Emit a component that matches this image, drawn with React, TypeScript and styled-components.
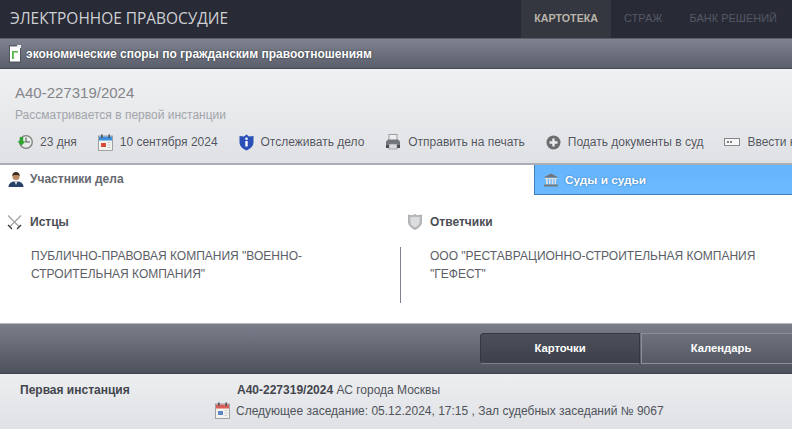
import React from "react";
import styled, { createGlobalStyle } from "styled-components";

const GlobalStyle = createGlobalStyle`
  html, body {
    margin: 0;
    padding: 0;
    height: 100%;
    overflow: hidden;
    background: #fff;
  }
  body {
    font-family: "Liberation Sans", Arial, sans-serif;
    font-size: 12px;
  }
`;

const Page = styled.div`
  width: 792px;
  height: 429px;
  overflow: hidden;
  display: flex;
  flex-direction: column;
`;

const Header = styled.header`
  height: 38px;
  flex: none;
  display: flex;
  justify-content: space-between;
  background: #282a36;
  border-bottom: 1px solid #585c68;
`;

const Logo = styled.div`
  padding-left: 10px;
  font-family: "Open Sans", sans-serif;
  font-size: 15.45px;
  line-height: 37px;
  color: #cfd0d3;
`;

const Nav = styled.nav`
  display: flex;
  padding-right: 1px;
`;

const NavItem = styled.a<{ $active?: boolean; $pad: number }>`
  padding: 0 ${({ $pad }) => $pad}px;
  font-size: ${({ $active }) => ($active ? "10.7px" : "11px")};
  line-height: 37px;
  font-weight: ${({ $active }) => ($active ? 700 : 400)};
  color: ${({ $active }) => ($active ? "#b9b5ab" : "#555965")};
  background: ${({ $active }) => ($active ? "#343640" : "transparent")};
`;

const CategoryBar = styled.div`
  height: 29px;
  flex: none;
  display: flex;
  align-items: center;
  gap: 5px;
  padding-left: 9px;
  background: linear-gradient(#7e838f, #5a5f6b);
  border-bottom: 1px solid #474b56;
  box-sizing: content-box;
`;

const CategoryText = styled.span`
  font-size: 12px;
  font-weight: 700;
  color: #fff;
  text-shadow: 0 0 2px #2d303a;
`;

const CaseInfo = styled.section`
  height: 96px;
  flex: none;
  box-sizing: border-box;
  padding: 15px 0 0 15px;
  background: linear-gradient(#f0f1f2, #dfe1e5);
  border-bottom: 2px solid #a9aeb7;
`;

const CaseNumber = styled.div`
  font-size: 15px;
  line-height: 18px;
  color: #85858b;
`;

const CaseStatus = styled.div`
  margin-top: 6px;
  font-size: 12px;
  line-height: 14px;
  color: #a3a5ab;
`;

const Tools = styled.div`
  display: flex;
  gap: 20.9px;
  margin-top: 11px;
  padding-left: 2px;
  white-space: nowrap;
`;

const Tool = styled.div`
  display: flex;
  align-items: center;
  gap: 7px;
  height: 18px;
  font-size: 12px;
  color: #50535c;
  text-shadow: 0 0 1px #fff;
  flex: none;
`;

const Icon = styled.svg`
  flex: none;
  display: block;
`;

const Tabs = styled.div`
  height: 30px;
  flex: none;
  display: flex;
`;

const Tab = styled.div<{ $active?: boolean }>`
  display: flex;
  align-items: center;
  gap: 6px;
  box-sizing: border-box;
  font-weight: 700;
  ${({ $active }) =>
    $active
      ? `
    width: 534px;
    padding: 0 0 2px 8px;
    font-size: 12px;
    color: #666870;
    background: #fff;
  `
      : `
    flex: 1;
    padding: 0 0 0 8px;
    font-size: 11.8px;
    color: #fff;
    text-shadow: 0 0 2px #2f6ea8;
    background: linear-gradient(#66b6fd, #6cb9ff);
    border-left: 1px solid #3e7fbd;
    border-bottom: 1px solid #3e7fbd;
  `}
`;

const Parties = styled.div`
  height: 128px;
  flex: none;
  display: grid;
  grid-template-columns: 400px 392px;
  padding-top: 17px;
  box-sizing: border-box;
  background: #fff;
`;

const Party = styled.div`
  display: flex;
  flex-direction: column;
`;

const PartyTitle = styled.div<{ $offset: number }>`
  display: flex;
  align-items: center;
  gap: 8px;
  height: 20px;
  padding-left: ${({ $offset }) => $offset}px;
  font-size: 12px;
  font-weight: 700;
  color: #4c4e56;
`;

const PartyBody = styled.div<{ $divided?: boolean }>`
  margin-top: 15px;
  height: 56px;
  box-sizing: border-box;
  padding: 0 ${({ $divided }) => ($divided ? "20px" : "70px")} 0
    ${({ $divided }) => ($divided ? "29px" : "30px")};
  font-size: 12px;
  line-height: 18px;
  color: #5b5e66;
  border-left: 1px solid ${({ $divided }) => ($divided ? "#7d818b" : "transparent")};
`;

const Switcher = styled.div`
  height: 51px;
  flex: none;
  display: flex;
  align-items: flex-start;
  padding: 9px 0 0 480px;
  box-sizing: border-box;
  background: linear-gradient(#7b7f8b, #4d515c);
  border-top: 1px solid #b6b9bf;
  border-bottom: 1px solid #3f434d;
`;

const SwitchButton = styled.div<{ $active?: boolean }>`
  height: 31px;
  flex: none;
  box-sizing: border-box;
  text-align: center;
  font-size: 11.3px;
  font-weight: 700;
  line-height: 29px;
  color: #fff;
  ${({ $active }) =>
    $active
      ? `
    width: 160px;
    border-radius: 4px 0 0 4px;
    border: 1px solid #353841;
    border-bottom-color: #7c808b;
    background: linear-gradient(#4c505b, #3d404a);
  `
      : `
    width: 160px;
    margin-left: 1px;
    border: 1px solid #8b8f99;
    background: linear-gradient(#6e727e, #555963);
  `}
`;

const Instances = styled.section`
  flex: 1;
  display: grid;
  grid-template-columns: 216px 1fr;
  padding-top: 8px;
  box-sizing: border-box;
  background: linear-gradient(#eceef0, #dfe1e5);
`;

const InstanceName = styled.div`
  padding-left: 20px;
  font-size: 12px;
  font-weight: 700;
  line-height: 16px;
  color: #43454d;
`;

const InstanceDetails = styled.div`
  display: flex;
  flex-direction: column;
  gap: 4px;
  font-size: 12px;
  line-height: 16px;
  color: #50535c;
`;

const InstanceCourt = styled.div`
  padding-left: 21px;
`;

const Meeting = styled.div`
  display: flex;
  align-items: center;
  gap: 6px;
  margin-left: -1px;
`;

const CaseLink = styled.b`
  color: #43454d;
`;

const ClipboardIcon = () => (
  <Icon width="12" height="18" viewBox="0 0 12 18">
    <rect x="0.500" y="1" width="11" height="16" fill="#fff" stroke="#3a3d45" strokeWidth="0.800" />
    <path d="M3 6h6v1.600H4.800V14H3z" fill="#55b548" />
    <rect x="8" y="0" width="4" height="3" fill="#eef0f2" />
  </Icon>
);

const ClockIcon = () => (
  <Icon width="16" height="16" viewBox="0 0 16 16">
    <circle cx="9" cy="8" r="6.300" fill="#e9eaea" stroke="#7d7f7c" strokeWidth="1.300" />
    <path d="M9 3.500V8h4" fill="none" stroke="#55575a" strokeWidth="1.100" />
    <path d="M4.500 11.500.5 7.500l2.300-.2V3h3.400v4.300l2.300.2z" fill="#2fa52f" />
  </Icon>
);

const CalendarIcon = ({ header = "#3d8fdc", accent = "#d84a3c" }: { header?: string; accent?: string }) => (
  <Icon width="15" height="17" viewBox="0 0 15 17">
    <rect x="0.500" y="2" width="14" height="14.500" fill="#f3f3ee" stroke="#8d8f92" strokeWidth="0.800" />
    <rect x="1" y="2.500" width="13" height="4" fill={header} />
    <rect x="3" y="0.500" width="1.600" height="3.500" fill="#51555c" />
    <rect x="10.400" y="0.500" width="1.600" height="3.500" fill="#51555c" />
    <rect x="3" y="9" width="5" height="4" fill={accent} />
    <path d="M9.500 8.500h3M9.500 11h3M9.500 13.500h3" stroke="#c0c3c6" strokeWidth="0.800" />
  </Icon>
);

const ShieldInfoIcon = () => (
  <Icon width="15" height="17" viewBox="0 0 15 17">
    <path d="M7.500.5 10 2.600 14.500 2v6.200c0 3.800-3.200 6.600-7 8.300C3.700 14.800.5 12 .5 8.200V2L5 2.600z" fill="#2a50b8" />
    <circle cx="7.500" cy="4.800" r="1.300" fill="#fff" />
    <rect x="6.300" y="7" width="2.400" height="5.500" fill="#fff" />
  </Icon>
);

const PrinterIcon = () => (
  <Icon width="16" height="16" viewBox="0 0 16 16">
    <rect x="4" y="0.500" width="8" height="6" fill="#eeeeee" stroke="#8a8c90" strokeWidth="0.800" />
    <path d="M1 7.500 3 5.500h10l2 2V13H1z" fill="#72757b" />
    <rect x="1" y="11" width="14" height="3" fill="#484a50" />
    <rect x="4" y="10" width="8" height="5" fill="#d8d9dc" stroke="#85878c" strokeWidth="0.600" />
  </Icon>
);

const PlusIcon = () => (
  <Icon width="15" height="15" viewBox="0 0 15 15">
    <circle cx="7.500" cy="7.500" r="7" fill="#6c6d70" />
    <path d="M7.500 3.500v8M3.500 7.500h8" stroke="#eceded" strokeWidth="2.400" />
  </Icon>
);

const KeyIcon = () => (
  <Icon width="16" height="16" viewBox="0 0 16 16">
    <rect x="0.500" y="4.500" width="15" height="7" fill="#f7f7f7" stroke="#85878b" />
    <circle cx="4" cy="8" r="1" fill="#555" />
    <circle cx="7" cy="8" r="1" fill="#555" />
  </Icon>
);

const PersonIcon = () => (
  <Icon width="16" height="17" viewBox="0 0 16 17">
    <path d="M0.500 16c0-3.500 2.500-5 5-5.600h5c2.500.6 5 2.100 5 5.600z" fill="#27406a" />
    <path d="M6.500 10.500h3L8 14z" fill="#e9e4dc" />
    <circle cx="8" cy="5.500" r="3.600" fill="#b98a63" />
    <path d="M4.300 5C4.300 2 6 1 8 1s3.700 1 3.700 4C10 3.800 6 3.800 4.300 5z" fill="#3b2a20" />
  </Icon>
);

const BankIcon = () => (
  <Icon width="16" height="14" viewBox="0 0 16 14">
    <path d="M8 .5 15.500 4.500H.5z" fill="#6f7478" />
    <rect x="1.500" y="5" width="13" height="1" fill="#d9dadb" />
    <path d="M3 6h1.800v5.500H3zM6 6h1.500v5.500H6zM8.800 6h1.500v5.500H8.800zM11.500 6h1.500v5.500h-1.500z" fill="#dfe1e1" />
    <rect x="1" y="11.500" width="14" height="2" fill="#74797d" />
  </Icon>
);

const SwordsIcon = () => (
  <Icon width="15" height="15" viewBox="0 0 15 15">
    <path d="M14 .5 3 11.500M1 .5l11 11" stroke="#a0a2a5" strokeWidth="1.200" fill="none" />
    <path d="M1 10l4 4M10 14l4-4" stroke="#34363b" strokeWidth="1.300" fill="none" />
  </Icon>
);

const ShieldIcon = () => (
  <Icon width="14" height="16" viewBox="0 0 14 16">
    <path d="M7 .5 9.500 1.800 13.500 1v7c0 3.500-3 6-6.500 7.500C3.500 14 .5 11.500.5 8V1l4 .8z" fill="#b9bbbe" stroke="#9b9da0" strokeWidth="0.700" />
    <path d="M7 3 11.500 3v5c0 2.500-2 4-4.500 5.300C4.500 12 2.500 10.500 2.500 8V3z" fill="#dcddde" />
  </Icon>
);

export default function App() {
  return (
    <Page>
      <GlobalStyle />
      <Header>
        <Logo>ЭЛЕКТРОННОЕ ПРАВОСУДИЕ</Logo>
        <Nav>
          <NavItem $active $pad={13}>КАРТОТЕКА</NavItem>
          <NavItem $pad={13}>СТРАЖ</NavItem>
          <NavItem $pad={14}>БАНК РЕШЕНИЙ</NavItem>
        </Nav>
      </Header>
      <CategoryBar>
        <ClipboardIcon />
        <CategoryText>экономические споры по гражданским правоотношениям</CategoryText>
      </CategoryBar>
      <CaseInfo>
        <CaseNumber>А40-227319/2024</CaseNumber>
        <CaseStatus>Рассматривается в первой инстанции</CaseStatus>
        <Tools>
          <Tool><ClockIcon />23 дня</Tool>
          <Tool><CalendarIcon />10 сентября 2024</Tool>
          <Tool><ShieldInfoIcon />Отслеживать дело</Tool>
          <Tool><PrinterIcon />Отправить на печать</Tool>
          <Tool><PlusIcon />Подать документы в суд</Tool>
          <Tool><KeyIcon />Ввести код</Tool>
        </Tools>
      </CaseInfo>
      <Tabs>
        <Tab $active><PersonIcon />Участники дела</Tab>
        <Tab><BankIcon />Суды и судьи</Tab>
      </Tabs>
      <Parties>
        <Party>
          <PartyTitle $offset={7}><SwordsIcon />Истцы</PartyTitle>
          <PartyBody>ПУБЛИЧНО-ПРАВОВАЯ КОМПАНИЯ "ВОЕННО-СТРОИТЕЛЬНАЯ КОМПАНИЯ"</PartyBody>
        </Party>
        <Party>
          <PartyTitle $offset={8}><ShieldIcon />Ответчики</PartyTitle>
          <PartyBody $divided>ООО "РЕСТАВРАЦИОННО-СТРОИТЕЛЬНАЯ КОМПАНИЯ "ГЕФЕСТ"</PartyBody>
        </Party>
      </Parties>
      <Switcher>
        <SwitchButton $active>Карточки</SwitchButton>
        <SwitchButton>Календарь</SwitchButton>
      </Switcher>
      <Instances>
        <InstanceName>Первая инстанция</InstanceName>
        <InstanceDetails>
          <InstanceCourt><CaseLink>А40-227319/2024</CaseLink> АС города Москвы</InstanceCourt>
          <Meeting>
            <CalendarIcon header="#d9605a" accent="#5d87c8" />
            Следующее заседание: 05.12.2024, 17:15 , Зал судебных заседаний № 9067
          </Meeting>
        </InstanceDetails>
      </Instances>
    </Page>
  );
}
